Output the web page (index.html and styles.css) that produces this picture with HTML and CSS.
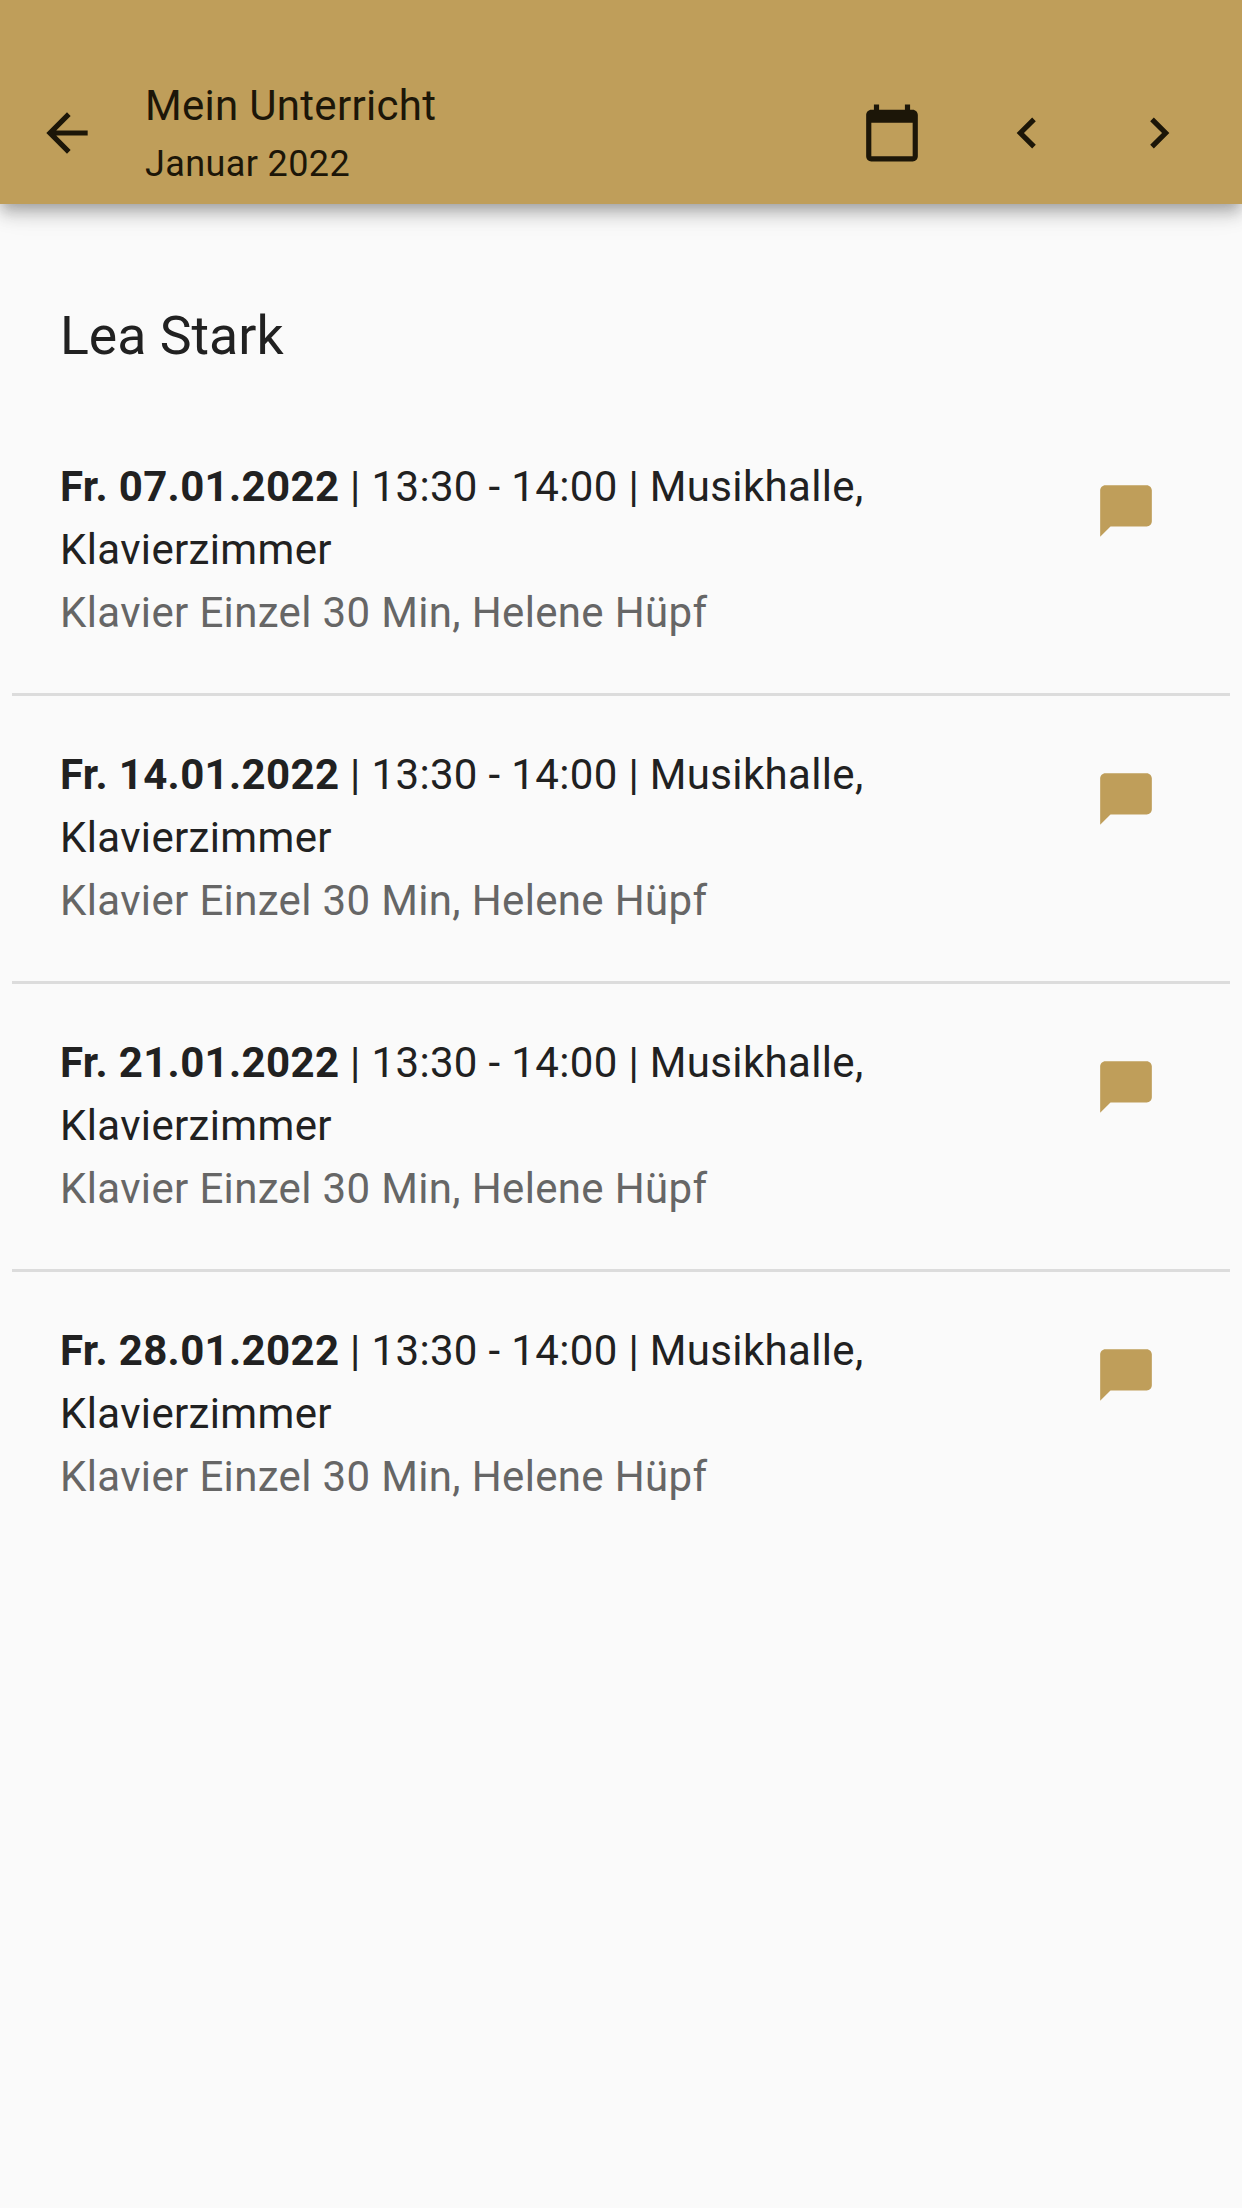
FILE: index.html
```html
<!DOCTYPE html>
<html lang="de">
<head>
  <meta charset="UTF-8">
  <meta name="viewport" content="width=device-width, initial-scale=1.0">
  <title>Mein Unterricht</title>
  <link rel="stylesheet" href="styles.css">
</head>
<body>
  <header class="appbar">
    <svg class="icon back" viewBox="0 0 24 24"><path d="M20 11H7.83l5.59-5.59L12 4l-8 8 8 8 1.41-1.41L7.83 13H20v-2z"/></svg>
    <div class="appbar-title">
      <div class="title">Mein Unterricht</div>
      <div class="subtitle">Januar 2022</div>
    </div>
    <svg class="icon calendar" viewBox="0 0 24 24"><path d="M20 3h-1V1h-2v2H7V1H5v2H4c-1.1 0-2 .9-2 2v16c0 1.1.9 2 2 2h16c1.1 0 2-.9 2-2V5c0-1.1-.9-2-2-2zm0 18H4V8h16v13z"/></svg>
    <svg class="icon prev" viewBox="0 0 24 24"><path d="M15.41 7.41L14 6l-6 6 6 6 1.41-1.41L10.83 12z"/></svg>
    <svg class="icon next" viewBox="0 0 24 24"><path d="M10 6L8.59 7.41 13.17 12l-4.58 4.59L10 18l6-6z"/></svg>
  </header>

  <main>
    <h2 class="student">Lea Stark</h2>
    <ul class="lessons">
      <li class="lesson">
        <div class="lesson-text">
          <p class="lesson-info"><b>Fr. 07.01.2022</b> | 13:30 - 14:00 | Musikhalle, Klavierzimmer</p>
          <p class="lesson-course">Klavier Einzel 30 Min, Helene Hüpf</p>
        </div>
        <svg class="comment" viewBox="0 0 24 24"><path d="M20 2H4c-1.1 0-2 .9-2 2v18l4-4h14c1.1 0 2-.9 2-2V4c0-1.1-.9-2-2-2z"/></svg>
      </li>
      <li class="lesson">
        <div class="lesson-text">
          <p class="lesson-info"><b>Fr. 14.01.2022</b> | 13:30 - 14:00 | Musikhalle, Klavierzimmer</p>
          <p class="lesson-course">Klavier Einzel 30 Min, Helene Hüpf</p>
        </div>
        <svg class="comment" viewBox="0 0 24 24"><path d="M20 2H4c-1.1 0-2 .9-2 2v18l4-4h14c1.1 0 2-.9 2-2V4c0-1.1-.9-2-2-2z"/></svg>
      </li>
      <li class="lesson">
        <div class="lesson-text">
          <p class="lesson-info"><b>Fr. 21.01.2022</b> | 13:30 - 14:00 | Musikhalle, Klavierzimmer</p>
          <p class="lesson-course">Klavier Einzel 30 Min, Helene Hüpf</p>
        </div>
        <svg class="comment" viewBox="0 0 24 24"><path d="M20 2H4c-1.1 0-2 .9-2 2v18l4-4h14c1.1 0 2-.9 2-2V4c0-1.1-.9-2-2-2z"/></svg>
      </li>
      <li class="lesson">
        <div class="lesson-text">
          <p class="lesson-info"><b>Fr. 28.01.2022</b> | 13:30 - 14:00 | Musikhalle, Klavierzimmer</p>
          <p class="lesson-course">Klavier Einzel 30 Min, Helene Hüpf</p>
        </div>
        <svg class="comment" viewBox="0 0 24 24"><path d="M20 2H4c-1.1 0-2 .9-2 2v18l4-4h14c1.1 0 2-.9 2-2V4c0-1.1-.9-2-2-2z"/></svg>
      </li>
    </ul>
  </main>
</body>
</html>
```

FILE: styles.css
```css
body {
  font-family: Roboto, sans-serif;
  margin: 0;
  min-height: 2208px;
  background-color: #fafafa;
  color: #212121;
}
.appbar {
  height: 142px;
  padding: 62px 0 0 36px;
  display: flex;
  align-items: center;
  background-color: #bf9e5a;
  color: #1c1608;
  box-shadow: 0 6px 12px -3px rgba(0, 0, 0, 0.2), 0 12px 15px rgba(0, 0, 0, 0.14), 0 3px 30px rgba(0, 0, 0, 0.12);
}
.icon {
  width: 62px;
  height: 62px;
  flex: none;
  fill: #1c1608;
}
.appbar-title {
  margin-left: 47px;
  padding-top: 9px;
  flex: 1;
}
.title {
  font-size: 42px;
  line-height: 54px;
  letter-spacing: 0.3px;
}
.subtitle {
  font-size: 36px;
  line-height: 63px;
  letter-spacing: 0.38px;
}
.prev {
  margin-left: 73px;
}
.next {
  margin-left: 70px;
  margin-right: 52px;
}
main {
  padding-top: 100px;
}
.student {
  margin: 0 0 40px 60px;
  font-size: 53.6px;
  font-weight: 400;
  line-height: 64px;
}
.lessons {
  list-style: none;
  margin: 0 12px;
  padding: 0;
}
.lesson {
  display: flex;
  padding: 47px 73px 49px 48px;
  border-bottom: 3px solid #dcdcdc;
}
.lesson:last-child {
  border-bottom: none;
}
.lesson-text {
  flex: 1;
  padding-right: 150px;
}
.lesson-text p {
  margin: 0;
  font-size: 42px;
  line-height: 63px;
  letter-spacing: 0.35px;
}
.lesson-info b {
  font-weight: 700;
}
.lesson-course {
  color: #666;
}
.comment {
  width: 62px;
  height: 62px;
  flex: none;
  margin-top: 25px;
  fill: #bf9e5a;
}
```
